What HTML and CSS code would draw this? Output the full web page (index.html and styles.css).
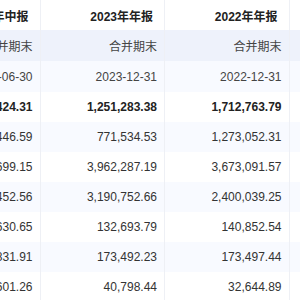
FILE: index.html
```html
<!DOCTYPE html>
<html lang="zh-CN">
<head>
    <meta charset="UTF-8">
    <title>资产负债表</title>
    <link rel="stylesheet" href="styles.css">
</head>
<body>
    <div class="report">
        <table class="report-table">
            <colgroup>
                <col class="period">
                <col class="period">
                <col class="period">
                <col class="period">
            </colgroup>
            <thead>
                <tr class="head-row">
                    <th>2024年中报</th>
                    <th>2023年年报</th>
                    <th>2022年年报</th>
                    <th>2021年年报</th>
                </tr>
                <tr class="sub-row">
                    <td>合并期末</td>
                    <td>合并期末</td>
                    <td>合并期末</td>
                    <td>合并期末</td>
                </tr>
            </thead>
            <tbody>
                <tr>
                    <td>2024-06-30</td>
                    <td>2023-12-31</td>
                    <td>2022-12-31</td>
                    <td>2021-12-31</td>
                </tr>
                <tr class="total">
                    <td>1,369,424.31</td>
                    <td>1,251,283.38</td>
                    <td>1,712,763.79</td>
                    <td>1,560,320.12</td>
                </tr>
                <tr>
                    <td>846,446.59</td>
                    <td>771,534.53</td>
                    <td>1,273,052.31</td>
                    <td>1,104,227.80</td>
                </tr>
                <tr>
                    <td>3,985,699.15</td>
                    <td>3,962,287.19</td>
                    <td>3,673,091.57</td>
                    <td>3,402,118.66</td>
                </tr>
                <tr>
                    <td>3,215,452.56</td>
                    <td>3,190,752.66</td>
                    <td>2,400,039.25</td>
                    <td>2,215,804.09</td>
                </tr>
                <tr>
                    <td>128,630.65</td>
                    <td>132,693.79</td>
                    <td>140,852.54</td>
                    <td>151,006.37</td>
                </tr>
                <tr>
                    <td>171,831.91</td>
                    <td>173,492.23</td>
                    <td>173,497.44</td>
                    <td>168,275.10</td>
                </tr>
                <tr>
                    <td>39,601.26</td>
                    <td>40,798.44</td>
                    <td>32,644.89</td>
                    <td>30,112.58</td>
                </tr>
                <tr>
                    <td>25,310.02</td>
                    <td>26,447.95</td>
                    <td>24,908.16</td>
                    <td>22,764.31</td>
                </tr>
            </tbody>
        </table>
    </div>
</body>
</html>
```

FILE: styles.css
```css
body {
    margin: 0;
    background: #fff;
    font-family: "Liberation Sans", Arial, "Noto Sans CJK SC", sans-serif;
    overflow: hidden;
}
.report {
    width: 600px;
    margin-left: -84.5px;
}
.report-table {
    border-collapse: collapse;
    table-layout: fixed;
    width: 498px;
    font-size: 12px;
    color: #333;
}
.period {
    width: 124.5px;
}
.report-table th,
.report-table td {
    height: 30px;
    padding: 0 7px 0 0;
    text-align: right;
    white-space: nowrap;
    overflow: hidden;
    border-right: 1px solid #eef0f5;
}
.report-table th {
    padding-right: 11px;
    font-weight: bold;
    color: #222;
    background: #fff;
}
.sub-row td {
    height: 31px;
    color: #444;
    background: #eef2fb;
}
.report-table tbody tr:nth-child(odd) td {
    background: #f8faff;
}
.report-table tbody tr:first-child td {
    height: 31px;
    color: #444;
}
.total td {
    font-weight: bold;
    color: #222;
}
```
